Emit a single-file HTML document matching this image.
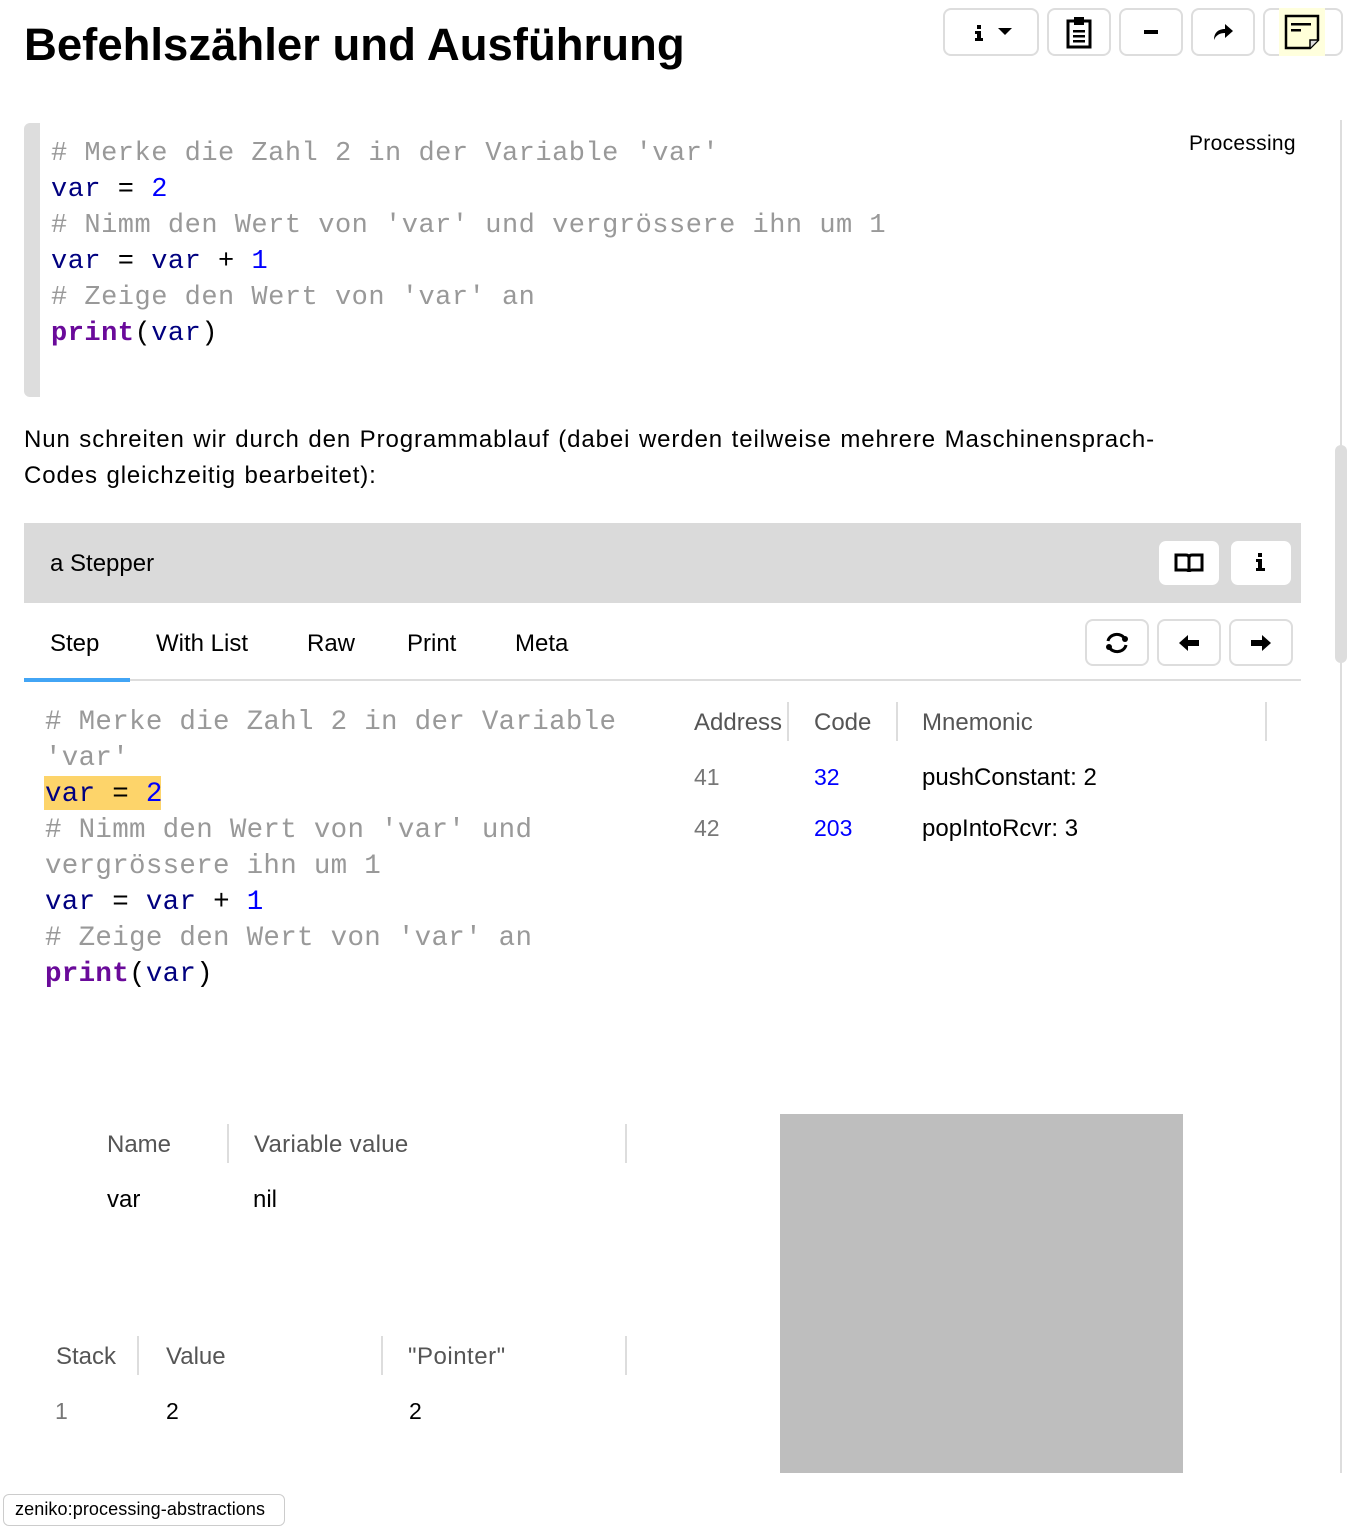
<!DOCTYPE html>
<html><head><meta charset="utf-8"><style>
body{margin:0;width:1349px;height:1529px;position:relative;background:#fff;font-family:"Liberation Sans",sans-serif;color:#000;overflow:hidden}
.a{position:absolute;white-space:pre}
.m{font-family:"Liberation Mono",monospace;font-size:27px;line-height:36px}
.c{color:#999}.v{color:#00007f}.n{color:#0000ff}.k{color:#6a0a9a;font-weight:bold}
.btn{position:absolute;border:2px solid #ddd;border-radius:8px;background:#fff;box-sizing:border-box;display:flex;align-items:center;justify-content:center}
.wb{position:absolute;background:#fff;border-radius:7px;display:flex;align-items:center;justify-content:center}
.t{font-size:23px}
.sep{position:absolute;width:2px;background:#ddd}
</style></head><body>
<div class="a" style="left:24px;top:19px;font-size:45.5px;font-weight:bold">Befehlszähler und Ausführung</div>

<div class="btn" style="left:943px;top:8px;width:96px;height:48px"><svg width="60" height="30"><rect x="16" y="8" width="4" height="4"/><rect x="14" y="14" width="6" height="3"/><rect x="16" y="14" width="4" height="10"/><rect x="14" y="21" width="8" height="3"/><path d="M37 11h14l-7 7z"/></svg></div>
<div class="btn" style="left:1047px;top:8px;width:64px;height:48px"><svg width="30" height="34"><rect x="4" y="6" width="22" height="26" fill="none" stroke="#000" stroke-width="3"/><rect x="10" y="2" width="10" height="8" fill="#000"/><rect x="9" y="15" width="12" height="2.5"/><rect x="9" y="20" width="12" height="2.5"/><rect x="9" y="25" width="12" height="2.5"/></svg></div>
<div class="btn" style="left:1119px;top:8px;width:64px;height:48px"><div style="width:14px;height:4px;background:#000"></div></div>
<div class="btn" style="left:1191px;top:8px;width:64px;height:48px"><svg width="24" height="20"><path d="M3 18 C3 10 8 7 14 7 V2 L22 9 L14 16 V11 C9 11 5 13 3 18z"/></svg></div>
<div class="btn" style="left:1263px;top:8px;width:80px;height:48px;justify-content:flex-start"><div style="margin-left:14px;width:46px;height:48px;background:#ffffdd;display:flex;align-items:center;justify-content:center"><svg width="36" height="36"><path d="M2 2h32v24l-8 8H2z" fill="#ffffd8" stroke="#000" stroke-width="2.5"/><rect x="7" y="9" width="20" height="2.5"/><rect x="7" y="15" width="10" height="2.5"/><path d="M26 34v-8h8" fill="#ddd" stroke="#000" stroke-width="1.5"/></svg></div></div>

<div style="position:absolute;left:24px;top:123px;width:16px;height:274px;background:#ddd;border-radius:6px 0 0 6px"></div>
<div class="a m" style="left:51px;top:136px;letter-spacing:0.5px"><span class="c"># Merke die Zahl 2 in der Variable 'var'</span>
<span class="v">var</span> = <span class="n">2</span>
<span class="c"># Nimm den Wert von 'var' und vergrössere ihn um 1</span>
<span class="v">var</span> = <span class="v">var</span> + <span class="n">1</span>
<span class="c"># Zeige den Wert von 'var' an</span>
<span class="k">print</span>(<span class="v">var</span>)</div>
<div class="a" style="left:1189px;top:132px;font-size:21px;letter-spacing:0.3px">Processing</div>
<div style="position:absolute;left:1340px;top:120px;width:2px;height:1353px;background:#ddd"></div>
<div style="position:absolute;left:1335px;top:445px;width:12px;height:218px;background:#ddd;border-radius:6px"></div>

<div class="a" style="left:24px;top:422px;font-size:24px;line-height:36px;letter-spacing:0.9px;word-spacing:1px">Nun schreiten wir durch den Programmablauf (dabei werden teilweise mehrere Maschinensprach-
Codes gleichzeitig bearbeitet):</div>

<div style="position:absolute;left:24px;top:523px;width:1277px;height:80px;background:#dadada"></div>
<div class="a" style="left:50px;top:550px;font-size:24px">a Stepper</div>
<div class="wb" style="left:1159px;top:541px;width:60px;height:44px"><svg width="30" height="22"><path d="M2 3h10c2 0 3 1 3 3v14c0-1-1-2-3-2H2z M28 3H18c-2 0-3 1-3 3v14c0-1 1-2 3-2h10z" fill="none" stroke="#000" stroke-width="3"/></svg></div>
<div class="wb" style="left:1231px;top:541px;width:60px;height:44px"><svg width="14" height="22"><rect x="4" y="1" width="4" height="4"/><rect x="2" y="7" width="6" height="3"/><rect x="4" y="7" width="4" height="11"/><rect x="2" y="16" width="9" height="3"/></svg></div>

<div class="a t" style="left:50px;top:630px;font-size:24px">Step</div>
<div class="a t" style="left:156px;top:630px;font-size:24px">With List</div>
<div class="a t" style="left:307px;top:630px;font-size:24px">Raw</div>
<div class="a t" style="left:407px;top:630px;font-size:24px">Print</div>
<div class="a t" style="left:515px;top:630px;font-size:24px">Meta</div>
<div style="position:absolute;left:24px;top:679px;width:1277px;height:2px;background:#ddd"></div>
<div style="position:absolute;left:24px;top:678px;width:106px;height:4px;background:#42a5f5"></div>
<div class="btn" style="left:1085px;top:619px;width:64px;height:47px"><svg width="26" height="22"><path d="M4 9a9 8 0 0 1 17-2M22 13a9 8 0 0 1-17 2" fill="none" stroke="#000" stroke-width="3"/><circle cx="21" cy="7" r="3"/><circle cx="5" cy="15" r="3"/></svg></div>
<div class="btn" style="left:1157px;top:619px;width:64px;height:47px"><svg width="22" height="18"><path d="M1 9l9-8v5h11v6H10v5z"/></svg></div>
<div class="btn" style="left:1229px;top:619px;width:64px;height:47px"><svg width="22" height="18"><path d="M21 9l-9-8v5H1v6h11v5z"/></svg></div>

<div style="position:absolute;left:44px;top:776px;width:117px;height:34px;background:#fdd46a"></div>
<div class="a m" style="left:45px;top:705px;font-size:27.5px;letter-spacing:0.3px"><span class="c"># Merke die Zahl 2 in der Variable
'var'</span>
<span class="v">var</span> = <span class="n">2</span>
<span class="c"># Nimm den Wert von 'var' und
vergrössere ihn um 1</span>
<span class="v">var</span> = <span class="v">var</span> + <span class="n">1</span>
<span class="c"># Zeige den Wert von 'var' an</span>
<span class="k">print</span>(<span class="v">var</span>)</div>

<div class="a t" style="left:694px;top:709px;color:#555;font-size:24px">Address</div>
<div class="sep" style="left:787px;top:702px;height:39px"></div>
<div class="a t" style="left:814px;top:709px;color:#555;font-size:24px">Code</div>
<div class="sep" style="left:896px;top:702px;height:39px"></div>
<div class="a t" style="left:922px;top:709px;color:#555;font-size:24px">Mnemonic</div>
<div class="sep" style="left:1265px;top:702px;height:39px"></div>
<div class="a t" style="left:694px;top:764px;color:#777">41</div>
<div class="a t" style="left:814px;top:764px;color:#00f">32</div>
<div class="a t" style="left:922px;top:764px;font-size:24px">pushConstant: 2</div>
<div class="a t" style="left:694px;top:815px;color:#777">42</div>
<div class="a t" style="left:814px;top:815px;color:#00f">203</div>
<div class="a t" style="left:922px;top:815px;font-size:24px">popIntoRcvr: 3</div>

<div class="a t" style="left:107px;top:1131px;color:#555;font-size:24px">Name</div>
<div class="sep" style="left:227px;top:1124px;height:39px"></div>
<div class="a t" style="left:254px;top:1131px;color:#555;font-size:24px;letter-spacing:0.3px">Variable value</div>
<div class="sep" style="left:625px;top:1124px;height:39px"></div>
<div class="a t" style="left:107px;top:1186px;font-size:24px">var</div>
<div class="a t" style="left:253px;top:1186px;font-size:24px">nil</div>

<div class="a t" style="left:56px;top:1343px;color:#555;font-size:24px">Stack</div>
<div class="sep" style="left:137px;top:1336px;height:39px"></div>
<div class="a t" style="left:166px;top:1343px;color:#555;font-size:24px">Value</div>
<div class="sep" style="left:381px;top:1336px;height:39px"></div>
<div class="a t" style="left:408px;top:1343px;color:#555;font-size:24px;letter-spacing:0.5px">"Pointer"</div>
<div class="sep" style="left:625px;top:1336px;height:39px"></div>
<div class="a t" style="left:55px;top:1398px;color:#777">1</div>
<div class="a t" style="left:166px;top:1398px">2</div>
<div class="a t" style="left:409px;top:1398px">2</div>

<div style="position:absolute;left:780px;top:1114px;width:403px;height:359px;background:#bebebe"></div>

<div style="position:absolute;left:3px;top:1494px;width:282px;height:32px;border:1.5px solid #ccc;border-radius:6px;box-sizing:border-box;font-size:18px;line-height:29px;padding-left:11px;letter-spacing:0.1px;white-space:nowrap">zeniko:processing-abstractions</div>
</body></html>
